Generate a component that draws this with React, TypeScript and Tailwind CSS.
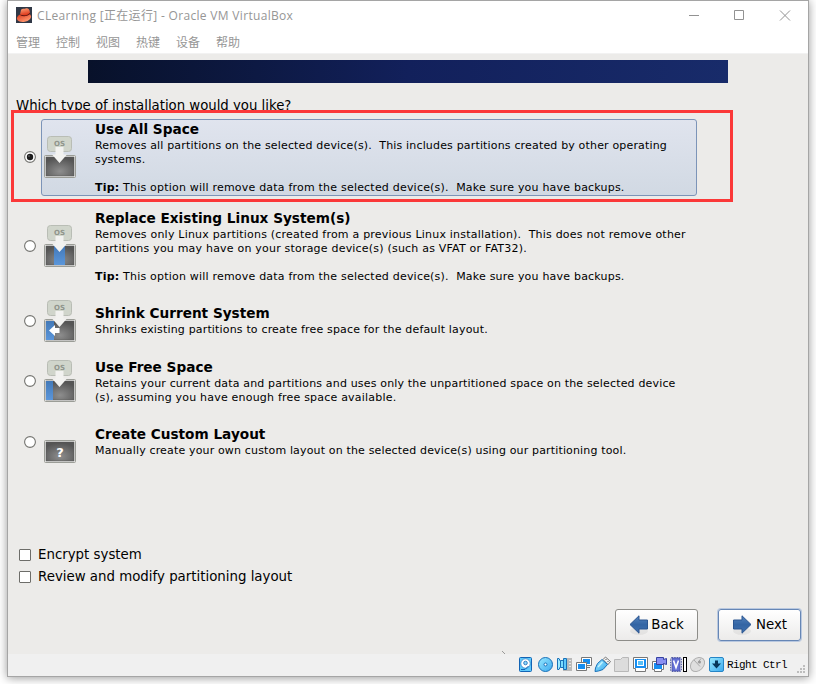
import React from "react";

type Kind = "all" | "replace" | "shrink" | "free" | "custom";

interface Option {
  kind: Kind;
  title: string;
  lines: { text: string; spacing: string }[];
  tip?: boolean;
  row: string;
}

const NORMAL = "tracking-[0.167px]";
const WIDE = "tracking-[0.205px]";

const options: Option[] = [
  {
    kind: "all",
    title: "Use All Space",
    lines: [
      {
        text: "Removes all partitions on the selected device(s).  This includes partitions created by other operating",
        spacing: NORMAL,
      },
      { text: "systems.", spacing: NORMAL },
    ],
    tip: true,
    row: "h-[77px] mb-3",
  },
  {
    kind: "replace",
    title: "Replace Existing Linux System(s)",
    lines: [
      {
        text: "Removes only Linux partitions (created from a previous Linux installation).  This does not remove other",
        spacing: WIDE,
      },
      { text: "partitions you may have on your storage device(s) (such as VFAT or FAT32).", spacing: WIDE },
    ],
    tip: true,
    row: "h-[77px] mb-[15px]",
  },
  {
    kind: "shrink",
    title: "Shrink Current System",
    lines: [{ text: "Shrinks existing partitions to create free space for the default layout.", spacing: NORMAL }],
    row: "h-[42px] mb-[15px]",
  },
  {
    kind: "free",
    title: "Use Free Space",
    lines: [
      {
        text: "Retains your current data and partitions and uses only the unpartitioned space on the selected device",
        spacing: NORMAL,
      },
      { text: "(s), assuming you have enough free space available.", spacing: WIDE },
    ],
    row: "h-[48px] mb-4",
  },
  {
    kind: "custom",
    title: "Create Custom Layout",
    lines: [
      {
        text: "Manually create your own custom layout on the selected device(s) using our partitioning tool.",
        spacing: "tracking-[0.157px]",
      },
    ],
    row: "h-[42px]",
  },
];

function DiskIcon({ kind, className }: { kind: Kind; className: string }) {
  return (
    <svg width="32" height="42" viewBox="0 0 32 42" className={"shrink-0 " + className}>
      <defs>
        <radialGradient id={"g-" + kind} cx="0.5" cy="0.75" r="0.7">
          <stop offset="0" stopColor="#8e8e8e" />
          <stop offset="1" stopColor="#555555" />
        </radialGradient>
        <linearGradient id={"b-" + kind} x1="0" y1="0" x2="0" y2="1">
          <stop offset="0" stopColor="#4379b8" />
          <stop offset="1" stopColor="#5b96da" />
        </linearGradient>
      </defs>
      <rect x="0.5" y="19.5" width="31" height="22" rx="1" fill="#e9e9e7" stroke="#9b9d97" />
      <rect x="2" y="21" width="28" height="19" fill={"url(#g-" + kind + ")"} stroke="#555553" strokeWidth="0.5" />
      {kind === "replace" && <rect x="10" y="21" width="11" height="19" fill={"url(#b-" + kind + ")"} />}
      {kind === "shrink" && <rect x="2" y="21" width="8" height="19" fill={"url(#b-" + kind + ")"} />}
      {kind === "free" && <rect x="2" y="21" width="7" height="19" fill={"url(#b-" + kind + ")"} />}
      {kind !== "custom" && (
        <>
          <rect x="3.5" y="0.5" width="24" height="15" rx="3" fill="#d0d5cb" stroke="#b9bdb5" />
          <text x="15.5" y="10" textAnchor="middle" fontSize="7" fontWeight="bold" fontFamily="DejaVu Sans, sans-serif" fill="#8f948b">
            OS
          </text>
          <path d="M11.500 11h8v7.500h3.500L15.500 27 8 18.500h3.500z" fill="#f2f2f0" />
        </>
      )}
      {kind === "shrink" && <path d="M5 30.500l6-5.500v3h4.500v5H11v3z" fill="#fff" />}
      {kind === "custom" && (
        <text x="16" y="35.500" textAnchor="middle" fontSize="13" fontWeight="bold" fontFamily="DejaVu Sans, sans-serif" fill="#fff">
          ?
        </text>
      )}
    </svg>
  );
}

function Radio({ checked, className }: { checked: boolean; className: string }) {
  return (
    <svg width="12" height="12" viewBox="0 0 12 12" className={"shrink-0 " + className}>
      <circle cx="6" cy="6" r="5.400" fill="#fff" stroke="#747470" strokeWidth="1.100" />
      {checked && <circle cx="6" cy="6" r="3.200" fill="#1c1c1c" />}
      {checked && <circle cx="5" cy="5" r="0.800" fill="#777" />}
    </svg>
  );
}

function OptionRow({ option, checked }: { option: Option; checked: boolean }) {
  const lift = option.tip ? "mb-px" : "";
  return (
    <div className={"flex items-center " + option.row}>
      <Radio checked={checked} className={lift} />
      <div
        className={
          "ml-[5px] flex h-full w-[656px] items-center rounded-[3px] border pl-[2px] " +
          (checked ? "border-[#7c94b8] bg-linear-to-b from-[#e0e4ee] to-[#d1d9e3]" : "border-transparent")
        }
      >
        <DiskIcon kind={option.kind} className={lift} />
        <div className={"ml-[19px] whitespace-pre text-[11px] leading-[14px] " + (option.kind === "free" ? "pt-[2px]" : "")}>
          <div className="mb-[2px] text-[13.650px] leading-4 font-bold">{option.title}</div>
          {option.lines.map((line) => (
            <div key={line.text} className={line.spacing}>
              {line.text}
            </div>
          ))}
          {option.tip && (
            <div className="mt-[14px] tracking-[0.205px]">
              <b>Tip:</b>
              {" This option will remove data from the selected device(s).  Make sure you have backups."}
            </div>
          )}
        </div>
      </div>
    </div>
  );
}

function HatIcon() {
  return (
    <svg width="16" height="16" viewBox="0 0 16 16">
      <defs>
        <linearGradient id="crown" x1="0" y1="0" x2="0.300" y2="1">
          <stop offset="0" stopColor="#ffa67c" />
          <stop offset="1" stopColor="#dd3a1c" />
        </linearGradient>
        <linearGradient id="brim" x1="0" y1="0" x2="0.300" y2="1">
          <stop offset="0" stopColor="#d8391c" />
          <stop offset="1" stopColor="#ff9068" />
        </linearGradient>
      </defs>
      <rect width="16" height="16" fill="#303846" />
      <ellipse cx="8" cy="10.500" rx="7.200" ry="4.300" transform="rotate(-12 8 10.500)" fill="url(#brim)" />
      <path d="M4 8c3 2 7 1.500 10-1l-.5-2-9 2z" fill="#5e1410" />
      <path d="M5 3c1-2 3-1 4.500-1.500C12 .8 13.500 2 14 5.500c-2 3-6.500 3.500-10 2z" fill="url(#crown)" />
    </svg>
  );
}

function Arrow({ right }: { right?: boolean }) {
  return (
    <svg width="20" height="22" viewBox="0 0 20 22" className={right ? "-scale-x-100" : ""}>
      <defs>
        <linearGradient id={right ? "arrow-right" : "arrow-left"} x1="0" y1="0" x2="0" y2="1">
          <stop offset="0" stopColor="#5584be" />
          <stop offset="0.500" stopColor="#3465a4" />
          <stop offset="1" stopColor="#3f70ae" />
        </linearGradient>
      </defs>
      <ellipse cx="10" cy="17" rx="9" ry="4" fill="#000" opacity="0.050" />
      <path
        d="M1 10.500l9-8.700V6h8.500v9H10v4.200z"
        fill={right ? "url(#arrow-right)" : "url(#arrow-left)"}
        stroke="#2b5590"
        strokeLinejoin="round"
      />
    </svg>
  );
}

function StatusIcons() {
  return (
    <svg width="207" height="18" viewBox="0 0 207 18">
      <defs>
        <linearGradient id="sky" x1="0" y1="0" x2="1" y2="1">
          <stop offset="0" stopColor="#9aeaff" />
          <stop offset="1" stopColor="#3ba9ef" />
        </linearGradient>
      </defs>
      {/* hard disk */}
      <rect x="1.500" y="2.500" width="12" height="14" rx="1" fill="#5fc9fb" stroke="#1264b5" />
      <circle cx="7.500" cy="8.500" r="4.700" fill="#fff" stroke="#1264b5" strokeWidth="0.600" />
      <circle cx="7.500" cy="8" r="1.800" fill="#8cd8fb" stroke="#1264b5" strokeWidth="0.800" />
      <path d="M3 14.500h4l3.500-3.500" fill="none" stroke="#1264b5" />
      {/* optical disc */}
      <circle cx="27.500" cy="9.500" r="7" fill="url(#sky)" stroke="#1870b8" />
      <circle cx="27.500" cy="9.500" r="1.500" fill="#fff" stroke="#1870b8" />
      {/* audio */}
      <path d="M49 3h5v13h-9v-2h4z" fill="#b9b9b9" />
      <path d="M51 5.500h2m-2 3h2m-2 3h2" stroke="#e8e8e8" />
      <path d="M39.500 3.500h1.500l1.500 3v5l-1.500 3h-1.500z" fill="#9aeaff" stroke="#1870b8" />
      <path d="M42.500 5.500h3v7h-3z" fill="#7bdcff" stroke="#1870b8" />
      <path d="M45.500 3.500h3v11h-3z" fill="#5fc9fb" stroke="#1870b8" />
      {/* network */}
      <path d="M63.500 2.500h10v8h-10zM66 12.500h6" fill="#fff" stroke="#777" />
      <rect x="65" y="4" width="7" height="5" fill="#168df0" />
      <path d="M58.500 7.500h10v8h-10z" fill="#fff" stroke="#777" />
      <rect x="60" y="9" width="7" height="5" fill="#168df0" />
      {/* usb */}
      <path d="M85 4.500l2.500-2.500 5 4.500-2.500 3z" fill="#f4f4f4" stroke="#777" />
      <path d="M84 4.500l5.500 5-4.500 5-4.500 1.500-3.500.5.5-3.500 2-4.500z" fill="url(#sky)" stroke="#1870b8" />
      <path d="M80 12l4.500-5" stroke="#c3f2ff" strokeWidth="1.500" />
      <path d="M87.500 4.500h1m1 2h1" stroke="#555" />
      {/* shared folder */}
      <path d="M96.500 4.500h6l2-2h6v14h-14z" fill="#dcdcdc" stroke="#b8b8b8" />
      {/* display */}
      <path d="M115.500 2.500h14v11h-2v3h-10v-3h-2z" fill="#fff" stroke="#777" />
      <rect x="117" y="4" width="11" height="9" fill="#168df0" />
      <rect x="119.500" y="5.500" width="6" height="5" fill="#59bff7" stroke="#fff" />
      {/* recording */}
      <path d="M134.500 6.500h11v8h-2v2h-7v-2h-2z" fill="#fff" stroke="#777" />
      <rect x="136" y="8" width="8" height="6" fill="#168df0" />
      <path d="M138.500 2.500h7v2l3-1v6l-3-1v1h-7z" fill="#8a8ff0" stroke="#3541a1" />
      {/* virtualization */}
      <rect x="152.700" y="2.700" width="10.600" height="13.600" rx="1" fill="none" stroke="#3e489c" strokeDasharray="1.500 1" />
      <rect x="154" y="3" width="8" height="13" fill="#6571d6" stroke="#3e489c" strokeWidth="0.600" />
      <path d="M155.500 5.500l2.500 7 2.500-7" fill="none" stroke="#fff" strokeWidth="1.600" />
      <rect x="165.500" y="2.500" width="3" height="14" fill="#fff" stroke="#000" />
      {/* mouse */}
      <ellipse cx="179.500" cy="9.500" rx="8" ry="6" transform="rotate(-45 179.500 9.500)" fill="#dedede" stroke="#b0b0b0" />
      <path d="M176 5l6 6.500m-2-4l3-4" stroke="#aaa" fill="none" />
      <circle cx="181.500" cy="7" r="1.500" fill="#999" />
      {/* host key */}
      <rect x="191.500" y="2.500" width="14" height="14" rx="1.500" fill="url(#sky)" stroke="#2585c6" />
      <path d="M197 5.500h3v3h3l-4.500 5-4.500-5h3z" fill="#06375b" />
    </svg>
  );
}

function CheckRow({ label }: { label: string }) {
  return (
    <div className="flex h-[22px] items-center">
      <div className="mt-px size-3 rounded-[1px] border border-[#6d6d69] bg-white" />
      <span className="mt-[2px] ml-[7px] text-[13.350px] leading-5">{label}</span>
    </div>
  );
}

export default function App() {
  return (
    <div className="h-[684px] w-[816px] overflow-hidden bg-white pl-[7px]">
      <div className="flex h-[677px] w-[802px] flex-col border border-[#a5a5a5] bg-[#ecebe9] font-['DejaVu_Sans',sans-serif] text-black shadow-[0_1px_9px_rgba(0,0,0,0.4)]">
        <header className="h-[53px] shrink-0 border-b border-[#f2f2f2] bg-white font-['Open_Sans','Noto_Sans_CJK_SC',sans-serif] text-[12px] text-[#969696]">
          <div className="flex h-7 items-center pl-2">
            <HatIcon />
            <span className="mt-px ml-[5px] whitespace-nowrap tracking-[0.320px]">CLearning [正在运行] - Oracle VM VirtualBox</span>
            <svg className="mt-px mr-[17px] ml-auto" width="102" height="11" viewBox="0 0 102 11" fill="none" stroke="#929292">
              <path d="M0 5.500h10M45.500.5h9v9h-9zM91 .5l10 10M101 .5l-10 10" />
            </svg>
          </div>
          <nav className="mt-1 flex h-5 items-center gap-4 pl-2">
            {["管理", "控制", "视图", "热键", "设备", "帮助"].map((item) => (
              <span key={item}>{item}</span>
            ))}
          </nav>
        </header>

        <main className="relative flex h-[600px] shrink-0 flex-col pt-[6px]">
          <div className="mx-auto h-[23px] w-[640px] shrink-0 bg-linear-to-r from-[#08112a] via-[#12205b] to-[#182b6a]" />
          <div className="mt-[14px] h-[18px] pl-2 text-[13.300px] leading-[18px] tracking-[-0.020px]">
            Which type of installation would you like?
          </div>
          <section className="relative mt-1 pl-4">
            {options.map((option) => (
              <OptionRow key={option.kind} option={option} checked={option.kind === "all"} />
            ))}
            <div className="absolute top-[-9px] left-[3px] h-[92px] w-[722px] border-3 border-[#fb3838]" />
          </section>
          <div className="mt-auto mb-[22px] pl-[11px]">
            <CheckRow label="Encrypt system" />
            <CheckRow label="Review and modify partitioning layout" />
          </div>
          <div className="mr-[7px] mb-[13px] flex justify-end gap-5 text-[13.350px]">
            <button className="flex h-8 w-[83px] items-center justify-center gap-[2px] rounded-[3px] border border-[#8d8d89] bg-linear-to-b from-white to-[#ecebea]">
              <Arrow />
              <span>Back</span>
            </button>
            <button className="flex h-8 w-[83px] items-center justify-center gap-1 rounded-[3px] border border-[#6686b5] bg-linear-to-b from-white to-[#ecebea] shadow-[0_0_0_1px_#b9c8df]">
              <Arrow right />
              <span>Next</span>
            </button>
          </div>
          <svg className="absolute top-[597px] left-[494px]" width="4" height="3" stroke="#999">
            <path d="M0 0l3 3" />
          </svg>
        </main>

        <footer className="flex h-[22px] shrink-0 items-center justify-end bg-[#f0f0f0] pb-[2px]">
          <StatusIcons />
          <span className="mt-[3px] ml-[2px] w-[61px] font-['Liberation_Mono',monospace] text-[11px] tracking-[-0.600px] whitespace-nowrap">
            Right Ctrl
          </span>
          <svg className="mt-[10px] mr-[3px] ml-[9px]" width="8" height="8" fill="#bdbdbd">
            <path d="M6 0h2v2H6zM3 3h2v2H3zM6 3h2v2H6zM0 6h2v2H0zM3 6h2v2H3zM6 6h2v2H6z" />
          </svg>
        </footer>
      </div>
    </div>
  );
}
